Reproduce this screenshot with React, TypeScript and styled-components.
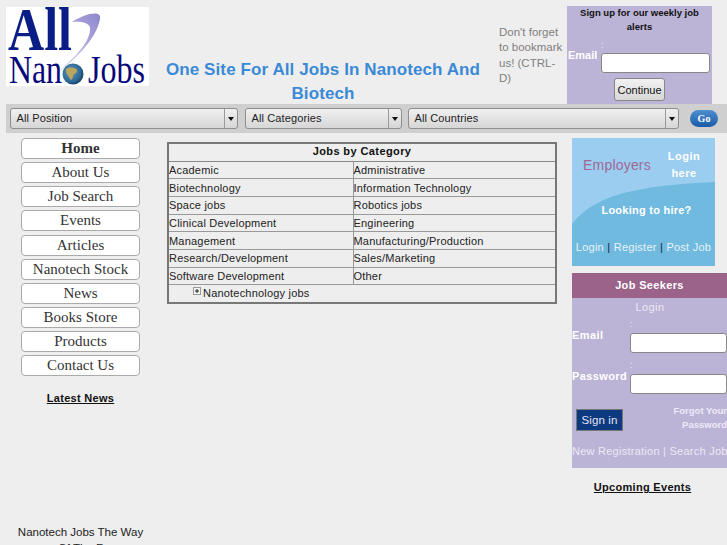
import React from 'react'
import styled, { createGlobalStyle } from 'styled-components'

const GlobalStyle = createGlobalStyle`
  html, body {
    margin: 0;
    height: 545px;
    overflow: hidden;
    background: #eeeeee;
    font-family: "Liberation Sans", Arial, sans-serif;
  }
  * { box-sizing: border-box; }
`

const Page = styled.div`
  width: 727px;
  height: 545px;
  overflow: hidden;
`

const Header = styled.header`
  display: flex;
  height: 104px;
  padding: 6px 0 0 6px;
`

const LogoBox = styled.div`
  width: 143px;
  height: 79px;
  margin-top: 1px;
  background: #fff;
`

const Title = styled.h1`
  width: 336px;
  margin: 52px 0 0 6px;
  color: #3a8ad8;
  font-size: 17px;
  font-weight: bold;
  line-height: 24px;
  letter-spacing: 0.1px;
  text-align: center;
`

const Bookmark = styled.p`
  width: 68px;
  margin: 19px 0 0 8px;
  color: #808080;
  font-size: 11.5px;
  line-height: 15.3px;
`

const Signup = styled.div`
  width: 145px;
  height: 98px;
  background: #bcb4d6;
  text-align: center;
`

const SignupTitle = styled.div`
  height: 31px;
  padding: 0 4px;
  font-size: 9.5px;
  font-weight: bold;
  line-height: 13.5px;
  color: #111;
`

const SignupRow = styled.div`
  display: flex;
  align-items: flex-end;
  height: 36px;
  padding-left: 1px;
`

const WhiteLabel = styled.label`
  color: #fff;
  font-size: 11px;
  font-weight: bold;
  line-height: 14px;
`

const SignupLabel = styled(WhiteLabel)`
  width: 33px;
  margin-bottom: 11px;
  text-align: left;
`

const FieldStack = styled.div`
  text-align: left;
`

const Colon = styled.div<{ $gap: number }>`
  height: 6px;
  margin-bottom: ${p => p.$gap}px;
  color: #ece8f4;
  font-size: 9px;
  line-height: 6px;
`

const Field = styled.input`
  display: block;
  height: 20px;
  border: 1px solid #888;
  border-radius: 3px;
  background: #fff;
  outline: none;
`

const SignupField = styled(Field)`
  width: 109px;
`

const GrayButton = styled.button`
  display: block;
  width: 51px;
  height: 23px;
  margin: 5px auto 0;
  padding: 0;
  border: 1px solid #888;
  border-radius: 3px;
  background: linear-gradient(#f2f2f2, #d8d8d8);
  color: #111;
  font-family: inherit;
  font-size: 11px;
`

const Toolbar = styled.div`
  display: flex;
  align-items: center;
  height: 29px;
  margin-left: 6px;
  padding-left: 4px;
  background: #cfcfcf;
`

const Select = styled.div<{ $w: number; $gap: number }>`
  display: flex;
  width: ${p => p.$w}px;
  height: 21px;
  margin-right: ${p => p.$gap}px;
  border: 1px solid #8e8e8e;
  border-radius: 3px;
  background: linear-gradient(#f0f0f0, #d6d6d6);
  color: #222;
  font-size: 11px;
  line-height: 19px;
  letter-spacing: 0.12px;
`

const SelectText = styled.span`
  flex: 1;
  padding-left: 5.5px;
`

const SelectArrow = styled.span`
  position: relative;
  width: 13px;
  border-left: 1px solid #9a9a9a;
  &::after {
    content: "";
    position: absolute;
    left: 3px;
    top: 8px;
    border: 3.5px solid transparent;
    border-top: 4px solid #111;
    border-bottom: 0;
  }
`

const GoButton = styled.button`
  width: 28px;
  height: 17px;
  padding: 0;
  border: 0;
  border-radius: 9px;
  background: linear-gradient(#4d8fd0, #1a5aa8);
  color: #fff;
  font-family: "Liberation Serif", serif;
  font-size: 10px;
  font-weight: bold;
`

const Main = styled.main`
  display: flex;
  align-items: flex-start;
`

const LeftCol = styled.nav`
  display: flex;
  flex-direction: column;
  align-items: center;
  width: 160px;
  padding: 5px 0 0 1px;
`

const NavButton = styled.a<{ $active?: boolean }>`
  display: block;
  width: 119px;
  height: 21px;
  margin-bottom: 3.15px;
  border: 1px solid #aaa;
  border-radius: 4px;
  background: #fff;
  color: #333;
  font-family: "Liberation Serif", serif;
  font-size: 15px;
  font-weight: ${p => (p.$active ? 'bold' : 'normal')};
  line-height: 18px;
  text-align: center;
`

const SectionLink = styled.a`
  display: block;
  color: #111;
  font-size: 11px;
  font-weight: bold;
  text-align: center;
  text-decoration: underline;
  letter-spacing: 0.3px;
`

const LatestNews = styled(SectionLink)`
  margin-top: 13px;
`

const Slogan = styled.p`
  width: 140px;
  margin: 120px 0 0;
  color: #222;
  font-size: 11.5px;
  line-height: 16px;
  text-align: center;
`

const Centre = styled.section`
  width: 412px;
  padding: 9px 0 0 7px;
`

const Table = styled.table`
  width: 390px;
  border: 2px solid #777;
  border-collapse: collapse;
  color: #222;
  font-size: 11px;
  letter-spacing: 0.2px;
  td, th {
    height: 17.7px;
    padding: 0;
    border: 1px solid #999;
  }
  td:first-child { width: 185px; }
  th {
    height: 18px;
    padding-bottom: 2px;
    color: #111;
    letter-spacing: 0.4px;
    text-align: center;
    border-bottom-color: #888;
  }
`

const TreeRow = styled.span`
  display: flex;
  align-items: center;
  padding-left: 24px;
`

const Plus = styled.svg`
  width: 8px;
  height: 8px;
  margin: -4px 2px 0 0;
`

const RightCol = styled.aside`
  width: 155px;
  flex: none;
  padding-top: 5px;
`

const Employers = styled.div`
  position: relative;
  width: 143px;
  height: 128px;
  color: #fff;
  overflow: hidden;
`

const WaveArt = styled.svg`
  position: absolute;
  inset: 0;
  width: 100%;
  height: 100%;
`

const EmployersTop = styled.div`
  position: relative;
  display: flex;
  height: 60px;
  padding: 10px 0 0 11px;
`

const EmployersHeading = styled.div`
  flex: 1;
  padding-top: 9px;
  color: #9f6a96;
  font-size: 14px;
  letter-spacing: 0.2px;
`

const LoginHere = styled.div`
  width: 56px;
  margin-right: 3px;
  font-size: 11px;
  font-weight: bold;
  line-height: 17px;
  letter-spacing: 0.5px;
  text-align: center;
`

const Hire = styled.div`
  position: relative;
  padding: 6px 0 0 6px;
  font-size: 11px;
  font-weight: bold;
  text-align: center;
  letter-spacing: 0.25px;
`

const EmployerLinks = styled.div`
  position: relative;
  margin-top: 25px;
  color: #e8f2f8;
  font-size: 11px;
  text-align: center;
  letter-spacing: 0.25px;
  white-space: nowrap;
  b { color: #224; font-weight: normal; }
`

const Seekers = styled.div`
  width: 165px;
  height: 195px;
  margin-top: 7px;
  background: #bcb4d6;
`

const SeekersHead = styled.div`
  height: 25px;
  background: #9b628a;
  color: #fff;
  font-size: 11px;
  font-weight: bold;
  line-height: 24px;
  letter-spacing: 0.35px;
  text-align: center;
  padding-right: 10px;
`

const SeekersLogin = styled.div`
  height: 23px;
  padding-right: 9px;
  color: #ece8f4;
  font-size: 11px;
  line-height: 18px;
  letter-spacing: 0.4px;
  text-align: center;
`

const SeekerRow = styled.div`
  display: flex;
  height: 40.5px;
`

const SeekerLabel = styled(WhiteLabel)`
  width: 58px;
  padding-top: 7px;
  letter-spacing: 0.4px;
`

const SeekerField = styled(Field)`
  width: 97px;
`

const SignRow = styled.div`
  display: flex;
  height: 35px;
  margin-top: 7px;
`

const SignIn = styled.button`
  width: 47px;
  height: 22px;
  padding: 0;
  margin-left: 4px;
  border: 1px solid #777;
  background: #0c3a80;
  color: #e4e4f4;
  font-family: inherit;
  font-size: 11.5px;
  letter-spacing: 0.1px;
`

const Forgot = styled.div`
  width: 104px;
  margin-top: -5px;
  color: #eeeaf6;
  font-size: 9.5px;
  font-weight: bold;
  line-height: 14px;
  text-align: right;
  white-space: nowrap;
`

const SeekerLinks = styled.div`
  margin-top: 1px;
  color: #ece8f4;
  font-size: 11px;
  letter-spacing: 0.25px;
  white-space: nowrap;
`

const UpcomingEvents = styled(SectionLink)`
  width: 141px;
  margin-top: 13px;
`

const rows = [
  ['Academic', 'Administrative'],
  ['Biotechnology', 'Information Technology'],
  ['Space jobs', 'Robotics jobs'],
  ['Clinical Development', 'Engineering'],
  ['Management', 'Manufacturing/Production'],
  ['Research/Development', 'Sales/Marketing'],
  ['Software Development', 'Other'],
]

const navItems = [
  'Home',
  'About Us',
  'Job Search',
  'Events',
  'Articles',
  'Nanotech Stock',
  'News',
  'Books Store',
  'Products',
  'Contact Us',
]

function Logo() {
  return (
    <svg width="143" height="79" viewBox="0 0 143 79">
      <defs>
        <radialGradient id="globe" cx="0.4" cy="0.4" r="0.75">
          <stop offset="0" stopColor="#5f94c0" />
          <stop offset="0.6" stopColor="#2f6a96" />
          <stop offset="1" stopColor="#0b2448" />
        </radialGradient>
        <linearGradient id="swoosh" x1="0" y1="1" x2="1" y2="0">
          <stop offset="0" stopColor="#e8e6f6" />
          <stop offset="1" stopColor="#8d86cc" />
        </linearGradient>
      </defs>
      <path d="M39 75 C62 58 86 36 84 20 C82 15 74 14 66 15 C80 6 96 3 94 12 C90 34 66 56 39 75Z" fill="url(#swoosh)" />
      <text x="2" y="43" fontFamily="Liberation Serif" fontWeight="bold" fontSize="62" textLength="64" lengthAdjust="spacingAndGlyphs" fill="#0a1c86">All</text>
      <text x="3" y="76" fontFamily="Liberation Serif" fontSize="40" textLength="53" lengthAdjust="spacingAndGlyphs" fill="#08087a">Nan</text>
      <circle cx="67" cy="67" r="10.5" fill="url(#globe)" />
      <path d="M60 62 C63 60 69 60 71 63 C72 66 68 66 67 69 C67 72 65 74 64 72 C63 69 59 66 60 62Z" fill="#b9a65c" />
      <text x="82" y="76" fontFamily="Liberation Serif" fontSize="40" textLength="57" lengthAdjust="spacingAndGlyphs" fill="#08087a">Jobs</text>
    </svg>
  )
}

export default function App() {
  return (
    <Page>
      <GlobalStyle />
      <Header>
        <LogoBox><Logo /></LogoBox>
        <Title>One Site For All Jobs In Nanotech And Biotech</Title>
        <Bookmark>Don't forget to bookmark us! (CTRL-D)</Bookmark>
        <Signup>
          <SignupTitle>Sign up for our weekly job alerts</SignupTitle>
          <SignupRow>
            <SignupLabel>Email</SignupLabel>
            <FieldStack>
              <Colon $gap={5}>:</Colon>
              <SignupField />
            </FieldStack>
          </SignupRow>
          <GrayButton>Continue</GrayButton>
        </Signup>
      </Header>

      <Toolbar>
        <Select $w={228} $gap={7}><SelectText>All Position</SelectText><SelectArrow /></Select>
        <Select $w={157} $gap={6}><SelectText>All Categories</SelectText><SelectArrow /></Select>
        <Select $w={271} $gap={11}><SelectText>All Countries</SelectText><SelectArrow /></Select>
        <GoButton>Go</GoButton>
      </Toolbar>

      <Main>
        <LeftCol>
          {navItems.map((item, i) => (
            <NavButton key={item} $active={i === 0}>{item}</NavButton>
          ))}
          <LatestNews>Latest News</LatestNews>
          <Slogan>Nanotech Jobs The Way Of The F</Slogan>
        </LeftCol>

        <Centre>
          <Table>
            <tbody>
              <tr><th colSpan={2}>Jobs by Category</th></tr>
              {rows.map(([a, b]) => (
                <tr key={a}><td>{a}</td><td>{b}</td></tr>
              ))}
              <tr>
                <td colSpan={2}>
                  <TreeRow>
                    <Plus viewBox="0 0 8 8">
                      <rect x="0.5" y="0.5" width="7" height="7" fill="#f4f4f4" stroke="#999" />
                      <path d="M2 4H6M4 2V6" stroke="#222" />
                    </Plus>
                    Nanotechnology jobs
                  </TreeRow>
                </td>
              </tr>
            </tbody>
          </Table>
        </Centre>

        <RightCol>
          <Employers>
            <WaveArt viewBox="0 0 143 128" preserveAspectRatio="none">
              <rect width="143" height="128" fill="#9bcdf0" />
              <path d="M0 86 C22 58 60 48 143 44 V128 H0Z" fill="#6fbade" />
            </WaveArt>
            <EmployersTop>
              <EmployersHeading>Employers</EmployersHeading>
              <LoginHere>Login<br />here</LoginHere>
            </EmployersTop>
            <Hire>Looking to hire?</Hire>
            <EmployerLinks>Login <b>|</b> Register <b>|</b> Post Job</EmployerLinks>
          </Employers>

          <Seekers>
            <SeekersHead>Job Seekers</SeekersHead>
            <SeekersLogin>Login</SeekersLogin>
            <SeekerRow>
              <SeekerLabel>Email</SeekerLabel>
              <FieldStack>
                <Colon $gap={6}>:</Colon>
                <SeekerField />
              </FieldStack>
            </SeekerRow>
            <SeekerRow>
              <SeekerLabel>Password</SeekerLabel>
              <FieldStack>
                <Colon $gap={6}>:</Colon>
                <SeekerField />
              </FieldStack>
            </SeekerRow>
            <SignRow>
              <SignIn>Sign in</SignIn>
              <Forgot>Forgot Your<br />Password</Forgot>
            </SignRow>
            <SeekerLinks>New Registration | Search Job</SeekerLinks>
          </Seekers>
          <UpcomingEvents>Upcoming Events</UpcomingEvents>
        </RightCol>
      </Main>
    </Page>
  )
}
